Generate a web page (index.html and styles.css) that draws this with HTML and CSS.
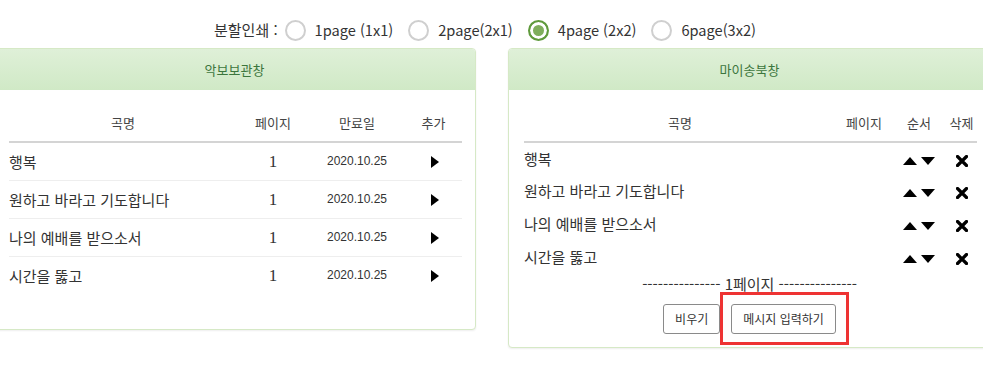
FILE: index.html
```html
<!DOCTYPE html>
<html lang="ko">
<head>
<meta charset="utf-8">
<link rel="stylesheet" href="styles.css">
</head>
<body>
<div class="page">
  <div class="split">
    <span class="split-label">분할인쇄 :</span>
    <label class="opt"><span class="radio"></span><span>1page (1x1)</span></label>
    <label class="opt"><span class="radio"></span><span>2page(2x1)</span></label>
    <label class="opt"><span class="radio on"></span><span>4page (2x2)</span></label>
    <label class="opt"><span class="radio"></span><span>6page(3x2)</span></label>
  </div>
  <div class="panels">
    <section class="panel">
      <div class="panel-heading">악보보관창</div>
      <div class="panel-body">
        <table class="tbl tbl-left">
          <colgroup><col class="c1"><col class="c2"><col class="c3"><col class="c4"></colgroup>
          <thead><tr><th>곡명</th><th>페이지</th><th>만료일</th><th>추가</th></tr></thead>
          <tbody>
            <tr><td class="name">행복</td><td class="num">1</td><td class="date">2020.10.25</td><td class="ctr"><svg class="play" width="8" height="12" viewBox="0 0 8 12"><polygon points="0,0 8,6 0,12"/></svg></td></tr>
            <tr><td class="name">원하고 바라고 기도합니다</td><td class="num">1</td><td class="date">2020.10.25</td><td class="ctr"><svg class="play" width="8" height="12" viewBox="0 0 8 12"><polygon points="0,0 8,6 0,12"/></svg></td></tr>
            <tr><td class="name">나의 예배를 받으소서</td><td class="num">1</td><td class="date">2020.10.25</td><td class="ctr"><svg class="play" width="8" height="12" viewBox="0 0 8 12"><polygon points="0,0 8,6 0,12"/></svg></td></tr>
            <tr><td class="name">시간을 뚫고</td><td class="num">1</td><td class="date">2020.10.25</td><td class="ctr"><svg class="play" width="8" height="12" viewBox="0 0 8 12"><polygon points="0,0 8,6 0,12"/></svg></td></tr>
          </tbody>
        </table>
      </div>
    </section>
    <section class="panel">
      <div class="panel-heading">마이송북창</div>
      <div class="panel-body body-right">
        <table class="tbl tbl-right">
          <colgroup><col class="r1"><col class="r2"><col class="r3"><col class="r4"></colgroup>
          <thead><tr><th>곡명</th><th>페이지</th><th>순서</th><th>삭제</th></tr></thead>
          <tbody>
            <tr><td class="name">행복</td><td></td><td class="ctr"><span class="arrows"><svg width="14" height="8" viewBox="0 0 14 8"><polygon points="7,0 14,8 0,8"/></svg><svg width="14" height="8" viewBox="0 0 14 8"><polygon points="0,0 14,0 7,8"/></svg></span></td><td class="ctr"><svg class="x" width="12" height="12" viewBox="0 0 12 12"><path d="M1.5 1.5 L10.5 10.5 M10.5 1.5 L1.5 10.5"/></svg></td></tr>
            <tr><td class="name">원하고 바라고 기도합니다</td><td></td><td class="ctr"><span class="arrows"><svg width="14" height="8" viewBox="0 0 14 8"><polygon points="7,0 14,8 0,8"/></svg><svg width="14" height="8" viewBox="0 0 14 8"><polygon points="0,0 14,0 7,8"/></svg></span></td><td class="ctr"><svg class="x" width="12" height="12" viewBox="0 0 12 12"><path d="M1.5 1.5 L10.5 10.5 M10.5 1.5 L1.5 10.5"/></svg></td></tr>
            <tr><td class="name">나의 예배를 받으소서</td><td></td><td class="ctr"><span class="arrows"><svg width="14" height="8" viewBox="0 0 14 8"><polygon points="7,0 14,8 0,8"/></svg><svg width="14" height="8" viewBox="0 0 14 8"><polygon points="0,0 14,0 7,8"/></svg></span></td><td class="ctr"><svg class="x" width="12" height="12" viewBox="0 0 12 12"><path d="M1.5 1.5 L10.5 10.5 M10.5 1.5 L1.5 10.5"/></svg></td></tr>
            <tr><td class="name">시간을 뚫고</td><td></td><td class="ctr"><span class="arrows"><svg width="14" height="8" viewBox="0 0 14 8"><polygon points="7,0 14,8 0,8"/></svg><svg width="14" height="8" viewBox="0 0 14 8"><polygon points="0,0 14,0 7,8"/></svg></span></td><td class="ctr"><svg class="x" width="12" height="12" viewBox="0 0 12 12"><path d="M1.5 1.5 L10.5 10.5 M10.5 1.5 L1.5 10.5"/></svg></td></tr>
          </tbody>
        </table>
        <div class="pagebreak">--------------- 1페이지 ---------------</div>
        <div class="actions">
          <button class="btn">비우기</button>
          <span class="highlight"><button class="btn">메시지 입력하기</button></span>
        </div>
      </div>
    </section>
  </div>
</div>
</body>
</html>
```
FILE: styles.css
```css
html, body {
  margin: 0;
  padding: 0;
  background: #fff;
  overflow: hidden;
}
body {
  font-family: "Noto Sans CJK KR", "Noto Sans", sans-serif;
  color: #333;
  font-size: 15px;
}
.page {
  width: 983px;
  height: 368px;
  overflow: hidden;
}
.split {
  display: flex;
  align-items: center;
  justify-content: center;
  height: 24px;
  margin-top: 18px;
  margin-bottom: 6px;
  font-size: 15px;
  line-height: 24px;
  color: #333;
  padding-left: 2px;
}
.split-label {
  margin-right: 7px;
}
.opt {
  display: flex;
  align-items: center;
  gap: 9px;
  margin-right: 15px;
  font-size: 14.6px;
}
.radio {
  width: 21px;
  height: 21px;
  box-sizing: border-box;
  border-radius: 50%;
  border: 2px solid #cfcfcf;
  background: #fff;
}
.radio.on {
  border-color: #5f9a3c;
  background: #7fae5c;
  box-shadow: inset 0 0 0 3px #fff;
}
.panels {
  display: flex;
  gap: 32px;
  margin-left: -7px;
  align-items: flex-start;
}
.panel {
  width: 483px;
  flex: none;
  box-sizing: border-box;
  border: 1px solid #d6e9c6;
  border-radius: 4px;
  background: #fff;
  box-shadow: 0 1px 2px rgba(0,0,0,.07);
}
.panel-heading {
  background: linear-gradient(to bottom, #dff0d8, #d0e9c6);
  color: #3c763d;
  font-size: 13px;
  line-height: 21px;
  padding: 10px 15px;
  text-align: center;
  border-radius: 3px 3px 0 0;
}
.panel-body {
  padding: 15px;
}
.tbl {
  width: 453px;
  border-collapse: collapse;
  table-layout: fixed;
  margin-bottom: 20px;
}
.c1 { width: 228px; }
.c2 { width: 72px; }
.c3 { width: 96px; }
.c4 { width: 57px; }
.r1 { width: 312px; }
.r2 { width: 56px; }
.r3 { width: 54px; }
.r4 { width: 31px; }
.tbl th {
  font-weight: normal;
  font-size: 13px;
  color: #444;
  padding: 8px 0;
  line-height: 20px;
  border-bottom: 2px solid #d4d4d4;
  text-align: center;
}
.tbl td {
  padding: 0;
  height: 37px;
  line-height: 21px;
  border-top: 1px solid #eee;
  vertical-align: middle;
  white-space: nowrap;
  overflow: hidden;
}
.tbl tbody tr:first-child td {
  border-top: 0;
  height: 37px;
}
.tbl-right td {
  height: 33px;
  border-top: 0;
}
.tbl-right tbody tr:first-child td {
  height: 31px;
}
.name {
  font-size: 15px;
  color: #333;
}
.num {
  text-align: center;
  font-family: "Liberation Serif", serif;
  font-size: 17px;
}
.date {
  text-align: center;
  font-family: "Liberation Sans", sans-serif;
  font-size: 12px;
  color: #333;
}
.ctr {
  text-align: center;
}
.play {
  display: block;
  margin: 0 auto;
  fill: #000;
  position: relative;
  left: 1px;
}
.arrows {
  display: inline-flex;
  gap: 4px;
  align-items: center;
  vertical-align: middle;
}
.arrows svg {
  fill: #000;
  display: block;
}
.x {
  display: inline-block;
  vertical-align: middle;
  stroke: #000;
  stroke-width: 3.2;
  stroke-linecap: round;
  fill: none;
}
.body-right .tbl {
  margin-bottom: 0;
}
.body-right {
  padding-bottom: 13px;
}
.pagebreak {
  text-align: center;
  font-size: 15px;
  line-height: 20px;
  color: #333;
  margin-top: 1px;
  margin-bottom: 10px;
}
.actions {
  display: flex;
  justify-content: center;
  align-items: center;
  gap: 11px;
}
.btn {
  font-family: "Noto Sans CJK KR", "Noto Sans", sans-serif;
  font-size: 12px;
  line-height: 18px;
  padding: 5px 11px;
  height: 30px;
  box-sizing: border-box;
  background: #fff;
  color: #333;
  border: 1px solid #8a8a8a;
  border-radius: 3px;
}
.highlight {
  position: relative;
  display: inline-block;
}
.highlight::after {
  content: "";
  position: absolute;
  top: -12px;
  left: -11px;
  right: -13px;
  bottom: -11px;
  border: 3px solid #ee3333;
  pointer-events: none;
}
```
